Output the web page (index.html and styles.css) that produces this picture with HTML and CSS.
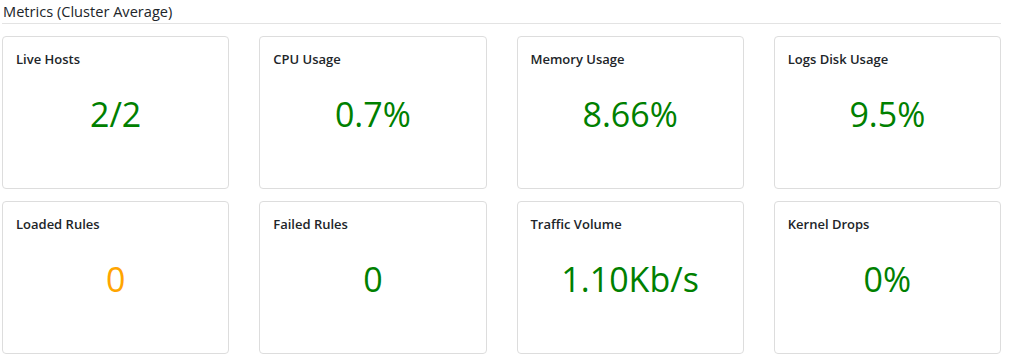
FILE: index.html
```html
<!DOCTYPE html>
<html>
<head lang="en">
<meta charset="UTF-8">
<title>Metrics</title>
<link rel="stylesheet" href="styles.css">
</head>
<body>
<div class="panel">
    <h5 class="panel-title">Metrics (Cluster Average)</h5>
    <div class="metrics">
        <div class="metric"><div class="metric-name">Live Hosts</div><div class="metric-value">2/2</div></div>
        <div class="metric"><div class="metric-name">CPU Usage</div><div class="metric-value">0.7%</div></div>
        <div class="metric"><div class="metric-name">Memory Usage</div><div class="metric-value">8.66%</div></div>
        <div class="metric"><div class="metric-name">Logs Disk Usage</div><div class="metric-value">9.5%</div></div>
        <div class="metric"><div class="metric-name">Loaded Rules</div><div class="metric-value warn">0</div></div>
        <div class="metric"><div class="metric-name">Failed Rules</div><div class="metric-value">0</div></div>
        <div class="metric"><div class="metric-name">Traffic Volume</div><div class="metric-value">1.10Kb/s</div></div>
        <div class="metric"><div class="metric-name">Kernel Drops</div><div class="metric-value">0%</div></div>
    </div>
</div>
</body>
</html>
```

FILE: styles.css
```css
*{box-sizing:border-box;}
body{margin:0;background:#fff;color:#212529;font-family:"Open Sans","Noto Sans",sans-serif;}
.panel{width:999px;margin-left:2px;}
.panel-title{margin:0;padding:3px 0 3px 1px;font-size:14.6px;font-weight:normal;line-height:17px;border-bottom:1px solid #e3e3e3;}
.metrics{display:grid;grid-template-columns:repeat(4,1fr);column-gap:30px;row-gap:12px;margin-top:12px;}
.metric{height:153px;padding:13px 13px;border:1px solid #ddd;border-radius:4px;background:#fff;}
.metric-name{font-size:13px;font-weight:600;line-height:18px;}
.metric-value{margin-top:25px;font-size:34px;line-height:43px;text-align:center;color:#008000;}
.metric-value.warn{color:#ffa500;}
```
